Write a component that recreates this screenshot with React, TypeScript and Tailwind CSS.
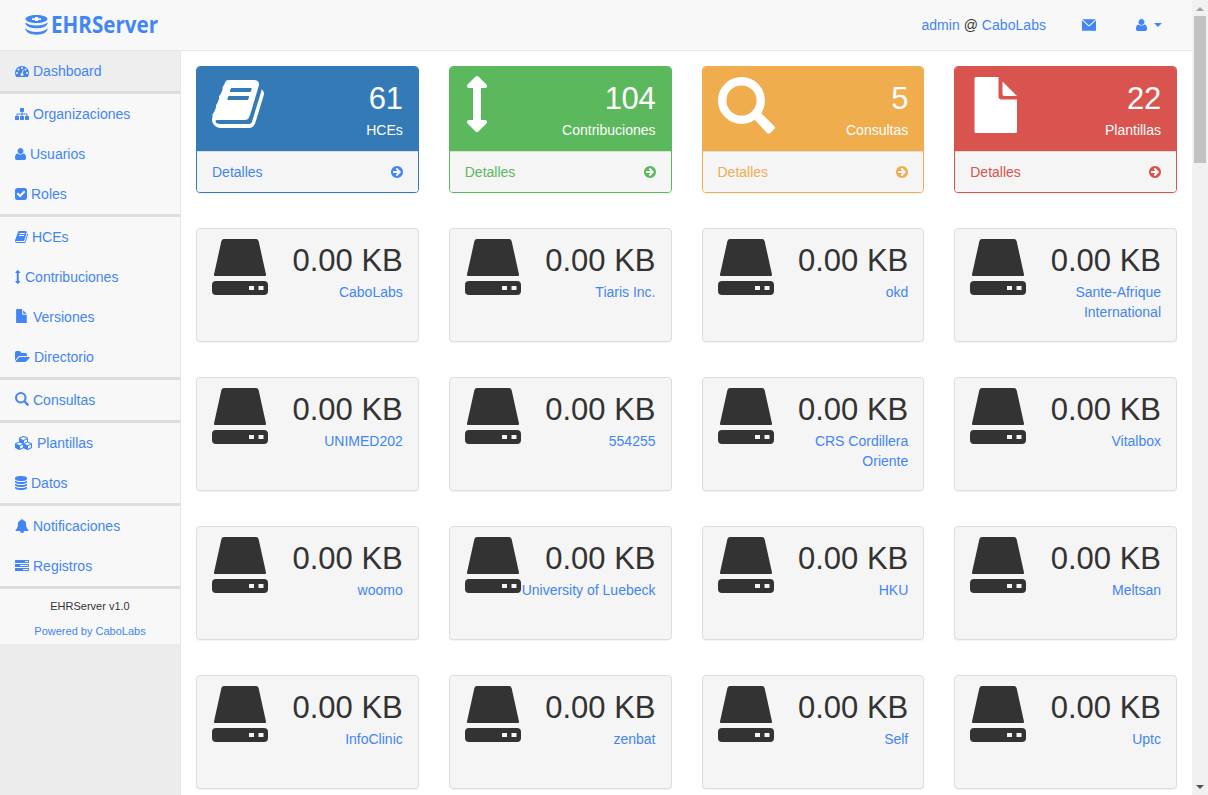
import React from 'react';

type Glyph = { box: string; node: React.ReactNode };

const arrowsV = 'M576 320q0 26-19 45t-45 19h-128v1024h128q26 0 45 19t19 45-19 45l-256 256q-19 19-45 19t-45-19l-256-256q-19-19-19-45t19-45 45-19h128v-1024h-128q-26 0-45-19t-19-45 19-45l256-256q19-19 45-19t45 19l256 256q19 19 19 45z';

const glyphs = {
  dashboard: {
    box: '0 0 1792 1792',
    node: <path d="M384 1152q0-53-37.5-90.5t-90.5-37.5-90.5 37.5-37.5 90.5 37.5 90.5 90.5 37.5 90.5-37.5 37.5-90.5zm192-448q0-53-37.5-90.5t-90.5-37.5-90.5 37.5-37.5 90.5 37.5 90.5 90.5 37.5 90.5-37.5 37.5-90.5zm428 481l101-382q6-26-7.5-48.5t-38.5-29.5-48 6.5-30 39.5l-101 382q-60 5-107 43.5t-63 98.5q-20 77 20 146t117 89 146-20 89-117q16-60-6-117t-72-91zm660-33q0-53-37.5-90.5t-90.5-37.5-90.5 37.5-37.5 90.5 37.5 90.5 90.5 37.5 90.5-37.5 37.5-90.5zm-640-640q0-53-37.5-90.5t-90.5-37.5-90.5 37.5-37.5 90.5 37.5 90.5 90.5 37.5 90.5-37.5 37.5-90.5zm448 192q0-53-37.5-90.5t-90.5-37.5-90.5 37.5-37.5 90.5 37.5 90.5 90.5 37.5 90.5-37.5 37.5-90.5zm320 448q0 261-141 483-19 29-54 29h-1402q-35 0-54-29-141-221-141-483 0-182 71-348t191-286 286-191 348-71 348 71 286 191 191 286 71 348z" />,
  },
  sitemap: {
    box: '0 0 1792 1792',
    node: <path d="M1792 1248v320q0 40-28 68t-68 28h-320q-40 0-68-28t-28-68v-320q0-40 28-68t68-28h96v-192h-512v192h96q40 0 68 28t28 68v320q0 40-28 68t-68 28h-320q-40 0-68-28t-28-68v-320q0-40 28-68t68-28h96v-192h-512v192h96q40 0 68 28t28 68v320q0 40-28 68t-68 28h-320q-40 0-68-28t-28-68v-320q0-40 28-68t68-28h96v-192q0-52 38-90t90-38h512v-192h-96q-40 0-68-28t-28-68v-320q0-40 28-68t68-28h320q40 0 68 28t28 68v320q0 40-28 68t-68 28h-96v192h512q52 0 90 38t38 90v192h96q40 0 68 28t28 68z" />,
  },
  user: {
    box: '192 0 1408 1792',
    node: <path d="M1600 1405q0 120-73 189.5t-194 69.5h-874q-121 0-194-69.5t-73-189.5q0-53 3.500-103.500t14-109 26.500-108.500 43-97.500 62-81 85.500-53.500 111.500-20q9 0 42 21.500t74.500 48 108 48 133.500 21.500 133.500-21.500 108-48 74.500-48 42-21.500q61 0 111.500 20t85.500 53.500 62 81 43 97.500 26.500 108.500 14 109 3.500 103.500zm-320-893q0 159-112.500 271.500t-271.500 112.500-271.500-112.500-112.500-271.500 112.500-271.500 271.500-112.500 271.500 112.500 112.500 271.500z" />,
  },
  check: {
    box: '128 0 1536 1792',
    node: <path d="M813 1299l614-614q19-19 19-45t-19-45l-102-102q-19-19-45-19t-45 19l-467 467-211-211q-19-19-45-19t-45 19l-102 102q-19 19-19 45t19 45l358 358q19 19 45 19t45-19zm851-883v960q0 119-84.500 203.500t-203.500 84.500h-960q-119 0-203.500-84.500t-84.500-203.500v-960q0-119 84.500-203.500t203.500-84.500h960q119 0 203.500 84.500t84.500 203.500z" />,
  },
  book: {
    box: '64 0 1664 1792',
    node: <path d="M1703 478q40 57 18 129l-275 906q-19 64-76.5 107.5t-122.5 43.5h-923q-77 0-148.5-53.5t-99.5-131.5q-24-67-2-127 0-4 3-27t4-37q1-8-3-21.500t-3-19.500q2-11 8-21t16.500-23.500 16.500-23.500q23-38 45-91.500t30-91.500q3-10 .5-30t-.5-28q3-11 17-28t17-23q21-36 42-92t25-90q1-9-2.500-32t.5-28q4-13 22-30.500t22-22.500q19-26 42.500-84.500t27.500-96.500q1-8-3-25.500t-2-26.500q2-8 9-18t18-23 17-21q8-12 16.500-30.500t15-35 16-36 19.500-32 26.500-23.500 36-11.500 47.500 5.500l-1 3q38-9 51-9h761q74 0 114 56t18 130l-274 906q-36 119-71.500 153.500t-128.500 34.500h-869q-27 0-38 15-11 16-1 43 24 70 144 70h923q29 0 56-15.500t35-41.500l300-987q7-22 5-57 38 15 59 43zm-1064 2q-4 13 2 22.500t20 9.500h608q13 0 25.500-9.500t16.500-22.500l21-64q4-13-2-22.500t-20-9.500h-608q-13 0-25.500 9.500t-16.500 22.500zm-83 256q-4 13 2 22.500t20 9.500h608q13 0 25.500-9.500t16.500-22.500l21-64q4-13-2-22.500t-20-9.500h-608q-13 0-25.500 9.500t-16.500 22.500z" />,
  },
  arrows: { box: '-96 0 768 1792', node: <path d={arrowsV} /> },
  file: {
    box: '0 0 56 56',
    node: <path d="M6 0h22.500v19.500q0 3 3 3H47V54.500q0 1.500-1.500 1.500H6q-1.500 0-1.500-1.500V1.500Q4.500 0 6 0zM32.500 4.500L47 19H34.500q-2 0-2-2z" />,
  },
  folder: {
    box: '0 0 1920 1792',
    node: <path d="M1879 952q0 31-31 66l-336 396q-43 51-120.500 86.500t-143.500 35.500h-1088q-34 0-60.500-13t-26.500-43q0-31 31-66l336-396q43-51 120.500-86.500t143.500-35.500h1088q34 0 60.500 13t26.500 43zm-343-344v160h-832q-94 0-197 47.500t-164 119.500l-337 396-5 6q0-4-.5-12.500t-.5-12.500v-960q0-92 66-158t158-66h320q92 0 158 66t66 158v32h544q92 0 158 66t66 158z" />,
  },
  search: {
    box: '0 0 57 57',
    node: (
      <>
        <circle cx="23.500" cy="23.500" r="19.300" fill="none" stroke="currentColor" strokeWidth="8.400" />
        <path d="M36 42L42.500 35.500L56.300 49.300q1.400 1.400 0 2.800L52.500 55.900q-1.800 1.400-3.600 0z" />
      </>
    ),
  },
  cubes: {
    box: '0 0 2304 1792',
    node: <path d="M640 1632l384-192v-314l-384 164v342zm-64-454l404-173-404-173-404 173zm1088 454l384-192v-314l-384 164v342zm-64-454l404-173-404-173-404 173zm-448-293l384-165v-266l-384 164v267zm-64-379l441-189-441-189-441 189zm1088 518v416q0 36-19 67t-52 47l-448 224q-25 14-57 14t-57-14l-448-224q-4-2-7-4-2 2-7 4l-448 224q-25 14-57 14t-57-14l-448-224q-33-16-52-47t-19-67v-416q0-38 21.500-70t56.500-48l434-186v-400q0-38 21.500-70t56.500-48l448-192q23-10 50-10t50 10l448 192q35 16 56.500 48t21.500 70v400l434 186q36 16 57 48t21 70z" />,
  },
  database: {
    box: '128 0 1536 1792',
    node: <path d="M896 768q237 0 443-43t325-127v170q0 69-103 128t-280 93.500-385 34.500-385-34.500-280-93.500-103-128v-170q119 84 325 127t443 43zm0 768q237 0 443-43t325-127v170q0 69-103 128t-280 93.500-385 34.500-385-34.500-280-93.500-103-128v-170q119 84 325 127t443 43zm0-384q237 0 443-43t325-127v170q0 69-103 128t-280 93.500-385 34.500-385-34.500-280-93.500-103-128v-170q119 84 325 127t443 43zm0-1152q208 0 385 34.500t280 93.500 103 128v128q0 69-103 128t-280 93.500-385 34.500-385-34.500-280-93.500-103-128v-128q0-69 103-128t280-93.500 385-34.500z" />,
  },
  bell: {
    box: '0 0 1792 1792',
    node: <path d="M912 1696q0-16-16-16-59 0-101.500-42.500t-42.500-101.500q0-16-16-16t-16 16q0 73 51.500 124.500t124.500 51.500q16 0 16-16zm816-288q0 52-38 90t-90 38h-448q0 106-75 181t-181 75-181-75-75-181h-448q-52 0-90-38t-38-90q50-42 91-88t85-119.500 74.500-158.500 50-206 19.500-260q0-152 117-282.500t307-158.500q-8-19-8-39 0-40 28-68t68-28 68 28 28 68q0 20-8 39 190 28 307 158.500t117 282.500q0 139 19.500 260t50 206 74.500 158.500 85 119.500 91 88z" />,
  },
  tasks: {
    box: '0 0 1792 1792',
    node: <path d="M1024 1408h640v-128h-640v128zm-384-512h1024v-128h-1024v128zm640-512h384v-128h-384v128zm512 832v256q0 26-19 45t-45 19h-1664q-26 0-45-19t-19-45v-256q0-26 19-45t45-19h1664q26 0 45 19t19 45zm0-512v256q0 26-19 45t-45 19h-1664q-26 0-45-19t-19-45v-256q0-26 19-45t45-19h1664q26 0 45 19t19 45zm0-512v256q0 26-19 45t-45 19h-1664q-26 0-45-19t-19-45v-256q0-26 19-45t45-19h1664q26 0 45 19t19 45z" />,
  },
  arrowCircle: {
    box: '128 0 1536 1792',
    node: <path d="M1413 896q0-27-18-45l-91-91-362-362q-18-18-45-18t-45 18l-91 91q-18 18-18 45t18 45l189 189h-502q-26 0-45 19t-19 45v128q0 26 19 45t45 19h502l-189 189q-19 19-19 45t19 45l91 91q18 18 45 18t45-18l362-362 91-91q18-18 18-45zm251 0q0 209-103 385.500t-279.500 279.500-385.500 103-385.500-103-279.500-279.500-103-385.500 103-385.500 279.500-279.500 385.500-103 385.500 103 279.500 279.500 103 385.500z" />,
  },
  envelope: {
    box: '0 0 14 12',
    node: <path d="M0.300 0.200h13.400L7.700 5.700q-0.700 0.600-1.400 0zM0 1.300L5.800 6.800q1.200 1 2.400 0L14 1.300V11.800H0z" />,
  },
  drive: {
    box: '0 0 56 56',
    node: <path fillRule="evenodd" d="M12 0h32q2 0 2.600 2L54 35.500q0.300 1.500-1 1.500H3q-1.300 0-1-1.500L9.400 2Q10 0 12 0zM4 42h48q4 0 4 4v6q0 4-4 4H4q-4 0-4-4v-6q0-4 4-4zM37 47v4h5v-4zM46.500 47v4h5v-4z" />,
  },
} satisfies Record<string, Glyph>;

type IconName = keyof typeof glyphs;

function Icon({ name, className }: { name: IconName; className: string }) {
  return (
    <svg viewBox={glyphs[name].box} fill="currentColor" className={`shrink-0 ${className}`} aria-hidden="true">
      {glyphs[name].node}
    </svg>
  );
}

type NavItem = { icon: IconName; size: string; label: string };

const navGroups: NavItem[][] = [
  [{ icon: 'dashboard', size: 'w-3.5 h-3.5', label: 'Dashboard' }],
  [
    { icon: 'sitemap', size: 'w-3.5 h-3.5', label: 'Organizaciones' },
    { icon: 'user', size: 'w-[11px] h-3.5', label: 'Usuarios' },
    { icon: 'check', size: 'w-3 h-3.5', label: 'Roles' },
  ],
  [
    { icon: 'book', size: 'w-[13px] h-3.5', label: 'HCEs' },
    { icon: 'arrows', size: 'w-1.5 h-3.5', label: 'Contribuciones' },
    { icon: 'file', size: 'w-3.5 h-3.5 -mt-0.5', label: 'Versiones' },
    { icon: 'folder', size: 'w-[15px] h-3.5', label: 'Directorio' },
  ],
  [{ icon: 'search', size: 'w-3.5 h-3.5 -mt-0.5', label: 'Consultas' }],
  [
    { icon: 'cubes', size: 'w-[18px] h-3.5', label: 'Plantillas' },
    { icon: 'database', size: 'w-3 h-3.5', label: 'Datos' },
  ],
  [
    { icon: 'bell', size: 'w-3.5 h-3.5', label: 'Notificaciones' },
    { icon: 'tasks', size: 'w-3.5 h-3.5', label: 'Registros' },
  ],
];

type Summary = {
  icon: IconName;
  iconSize: string;
  value: string;
  label: string;
  head: string;
  border: string;
  link: string;
};

const summaries: Summary[] = [
  { icon: 'book', iconSize: 'w-[52px] h-14', value: '61', label: 'HCEs', head: 'bg-[#337ab7]', border: 'border-[#337ab7]', link: 'text-[#4285f4]' },
  { icon: 'arrows', iconSize: 'w-[26px] h-14', value: '104', label: 'Contribuciones', head: 'bg-[#5cb85c]', border: 'border-[#5cb85c]', link: 'text-[#5cb85c]' },
  { icon: 'search', iconSize: 'w-[57px] h-[57px] mt-px', value: '5', label: 'Consultas', head: 'bg-[#f0ad4e]', border: 'border-[#f0ad4e]', link: 'text-[#f0ad4e]' },
  { icon: 'file', iconSize: 'w-14 h-14 mt-px', value: '22', label: 'Plantillas', head: 'bg-[#d9534f]', border: 'border-[#d9534f]', link: 'text-[#d9534f]' },
];

const organizations = [
  'CaboLabs', 'Tiaris Inc.', 'okd', 'Sante-Afrique International',
  'UNIMED202', '554255', 'CRS Cordillera Oriente', 'Vitalbox',
  'woomo', 'University of Luebeck', 'HKU', 'Meltsan',
  'InfoClinic', 'zenbat', 'Self', 'Uptc',
];

function Header() {
  return (
    <header className="flex h-[51px] shrink-0 items-center border-b border-[#e7e7e7] bg-[#f8f8f8] text-[#4285f4]">
      <div className="ml-[25px] flex items-center">
        <svg viewBox="0 0 23 20" className="h-5 w-[23px]" fill="currentColor" aria-hidden="true">
          <path fillRule="evenodd" d="M11.500 0C17.800 0 22.500 1.700 22.500 4S17.800 8 11.500 8 0.500 6.300 0.500 4 5.200 0 11.500 0zM9.900 2v1.200H7v1.800h2.900v1h3.200V5H16V3.200h-2.900V2z" />
          <path d="M0.500 7.500Q4 10.500 11.500 10.500T22.500 7.500V9Q20.500 13.200 11.500 13.200T0.500 9zM0.500 13.200Q4 17 11.500 17T22.500 13.200V14.800Q20.500 19.700 11.500 19.700T0.500 14.800z" />
        </svg>
        <svg width="124" height="36" viewBox="0 0 124 36" className="ml-[3px] overflow-visible" fill="currentColor">
          <text x="0" y="25.500" textLength="107" lengthAdjust="spacingAndGlyphs" className="font-['Open_Sans',sans-serif] text-[22.5px] font-bold">EHRServer</text>
        </svg>
      </div>
      <div className="ml-auto flex items-center pr-[30px]">
        <span className="tracking-[0.04px]">admin <span className="text-[#333]">@</span> CaboLabs</span>
        <Icon name="envelope" className="ml-9 h-3 w-3.5" />
        <Icon name="user" className="ml-10 h-3.5 w-[11px]" />
        <svg viewBox="0 0 8 4" className="ml-[7px] h-1 w-2" fill="currentColor" aria-hidden="true">
          <path d="M0 0h8L4 4z" />
        </svg>
      </div>
    </header>
  );
}

function Sidebar() {
  return (
    <aside className="w-[181px] shrink-0 border-r border-[#e7e7e7] bg-[#ececec]">
      <nav className="bg-[#f8f8f8]">
        {navGroups.map((group, index) => (
          <ul key={index} className="border-b-[3px] border-[#ddd]">
            {group.map((item) => (
              <li key={item.label} className={`flex h-10 items-center gap-1 pl-[15px] text-[#4285f4] ${index === 0 ? 'bg-[#eee]' : ''}`}>
                <Icon name={item.icon} className={item.size} />
                <a>{item.label}</a>
              </li>
            ))}
          </ul>
        ))}
      </nav>
      <div className="h-[55px] bg-[#f8f8f8] pt-[5px] text-center text-[11px] leading-[25px]">
        <div>EHRServer v1.0</div>
        <div className="text-[#4285f4]">Powered by CaboLabs</div>
      </div>
    </aside>
  );
}

function SummaryCard({ item }: { item: Summary }) {
  return (
    <section className={`h-[127px] overflow-hidden rounded border shadow-[0_1px_1px_rgba(0,0,0,0.05)] ${item.border}`}>
      <div className={`flex h-[84px] justify-between px-[15px] pt-[9px] text-white ${item.head}`}>
        <Icon name={item.icon} className={item.iconSize} />
        <div className="pt-0.5 text-right">
          <div className="text-[31px] leading-[42px] tracking-[-0.3px]">{item.value}</div>
          <div>{item.label}</div>
        </div>
      </div>
      <div className={`flex h-[41px] items-center justify-between border-t border-[#ddd] bg-[#f5f5f5] px-[15px] ${item.link}`}>
        <span>Detalles</span>
        <Icon name="arrowCircle" className="h-3.5 w-3" />
      </div>
    </section>
  );
}

function OrganizationCard({ name }: { name: string }) {
  return (
    <section className="flex h-[114px] rounded border border-[#ddd] bg-[#f5f5f5] px-[15px] pt-[9px] shadow-[0_1px_1px_rgba(0,0,0,0.05)]">
      <Icon name="drive" className="mt-px h-14 w-14" />
      <div className="min-w-0 flex-1 pt-0.5 text-right">
        <div className="text-[31px] leading-[42px] whitespace-nowrap">0.00 KB</div>
        <a className="ml-auto block max-w-[136px] text-[#4285f4]">{name}</a>
      </div>
    </section>
  );
}

function Scrollbar() {
  return (
    <div className="flex w-4 shrink-0 flex-col items-center justify-between bg-[#f1f1f1]">
      <div className="flex flex-col items-center">
        <svg viewBox="0 0 16 16" className="h-4 w-4" fill="#a3a3a3" aria-hidden="true"><path d="M4 11h8L8 7z" /></svg>
        <div className="h-[147px] w-3 bg-[#c1c1c1]" />
      </div>
      <svg viewBox="0 0 16 16" className="h-4 w-4" fill="#505050" aria-hidden="true"><path d="M4 6h8L8 10z" /></svg>
    </div>
  );
}

export default function App() {
  return (
    <div className="flex h-[795px] w-[1208px] overflow-hidden bg-white font-['Liberation_Sans',Arial,sans-serif] text-sm leading-5 text-[#333]">
      <div className="flex min-w-0 flex-1 flex-col">
        <Header />
        <div className="flex min-h-0 flex-1">
          <Sidebar />
          <main className="min-w-0 flex-1 overflow-hidden p-[15px]">
            <div className="grid grid-cols-4 gap-x-[30px] gap-y-[35px]">
              {summaries.map((item) => <SummaryCard key={item.label} item={item} />)}
              {organizations.map((name) => <OrganizationCard key={name} name={name} />)}
            </div>
          </main>
        </div>
      </div>
      <Scrollbar />
    </div>
  );
}
